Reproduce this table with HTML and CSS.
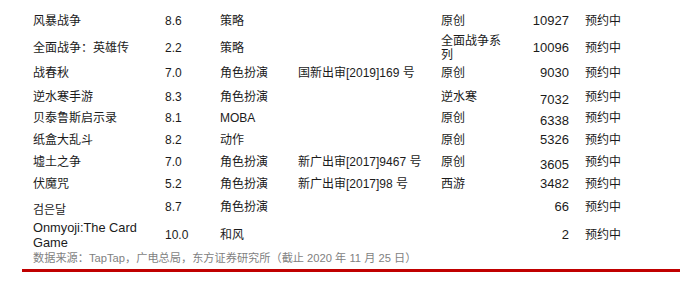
FILE: index.html
```html
<!DOCTYPE html>
<html lang="zh-CN">
<head>
<meta charset="utf-8">
<link rel="stylesheet" href="styles.css">
</head>
<body>
<div class="page">
  <div class="table">
    <div class="row h26"><span>风暴战争</span><span>8.6</span><span>策略</span><span></span><span>原创</span><span class="num">10927</span><span class="status">预约中</span></div>
    <div class="row h26"><span>全面战争：英雄传</span><span>2.2</span><span>策略</span><span></span><span class="wrap">全面战争系列</span><span class="num">10096</span><span class="status">预约中</span></div>
    <div class="row h26"><span>战春秋</span><span>7.0</span><span>角色扮演</span><span>国新出审[2019]169 号</span><span>原创</span><span class="num">9030</span><span class="status">预约中</span></div>
    <div class="row h21"><span>逆水寒手游</span><span>8.3</span><span>角色扮演</span><span></span><span>逆水寒</span><span class="num low">7032</span><span class="status">预约中</span></div>
    <div class="row h22"><span>贝泰鲁斯启示录</span><span>8.1</span><span>MOBA</span><span></span><span>原创</span><span class="num low">6338</span><span class="status">预约中</span></div>
    <div class="row h22"><span>纸盒大乱斗</span><span>8.2</span><span>动作</span><span></span><span>原创</span><span class="num">5326</span><span class="status">预约中</span></div>
    <div class="row h22"><span>墟土之争</span><span>7.0</span><span>角色扮演</span><span>新广出审[2017]9467 号</span><span>原创</span><span class="num low">3605</span><span class="status">预约中</span></div>
    <div class="row h21"><span>伏魔咒</span><span>5.2</span><span>角色扮演</span><span>新广出审[2017]98 号</span><span>西游</span><span class="num">3482</span><span class="status">预约中</span></div>
    <div class="row h26"><span class="kr">검은달</span><span>8.7</span><span>角色扮演</span><span></span><span></span><span class="num">66</span><span class="status">预约中</span></div>
    <div class="row h27"><span class="wrap2">Onmyoji:The Card Game</span><span>10.0</span><span>和风</span><span></span><span></span><span class="num">2</span><span class="status">预约中</span></div>
  </div>
  <p class="note">数据来源：TapTap，广电总局，东方证券研究所（截止 2020 年 11 月 25 日）</p>
  <div class="rule"></div>
</div>
</body>
</html>
```

FILE: styles.css
```css
html, body {
  margin: 0;
  padding: 0;
  background: #ffffff;
}

.page {
  width: 688px;
  height: 282px;
  padding-top: 8px;
  box-sizing: border-box;
  font-family: "Liberation Sans", "Noto Sans CJK SC", sans-serif;
  color: #1b1b1b;
}

.table {
  padding-left: 33px;
  font-size: 12px;
  line-height: 14px;
}

.row {
  display: grid;
  grid-template-columns: 132px 55px 78px 143px 62px 66px 1fr;
  align-items: center;
}

.h21 { height: 21px; }
.h22 { height: 22px; }
.h26 { height: 26px; }
.h27 { height: 27px; }

.num {
  text-align: right;
  font-size: 13px;
}

.low {
  padding-top: 6px;
}

.status {
  padding-left: 16px;
}

.wrap {
  line-height: 14px;
}

.wrap2 {
  font-size: 12.8px;
  line-height: 15px;
}

.kr {
  font-family: "Noto Sans CJK KR", sans-serif;
  padding-top: 3px;
}

.note {
  margin: 0;
  height: 22px;
  padding-left: 33px;
  font-size: 11.2px;
  line-height: 22px;
  color: #7f7f7f;
}

.rule {
  margin-left: 22px;
  width: 658px;
  height: 3px;
  background: #c00000;
}
```
